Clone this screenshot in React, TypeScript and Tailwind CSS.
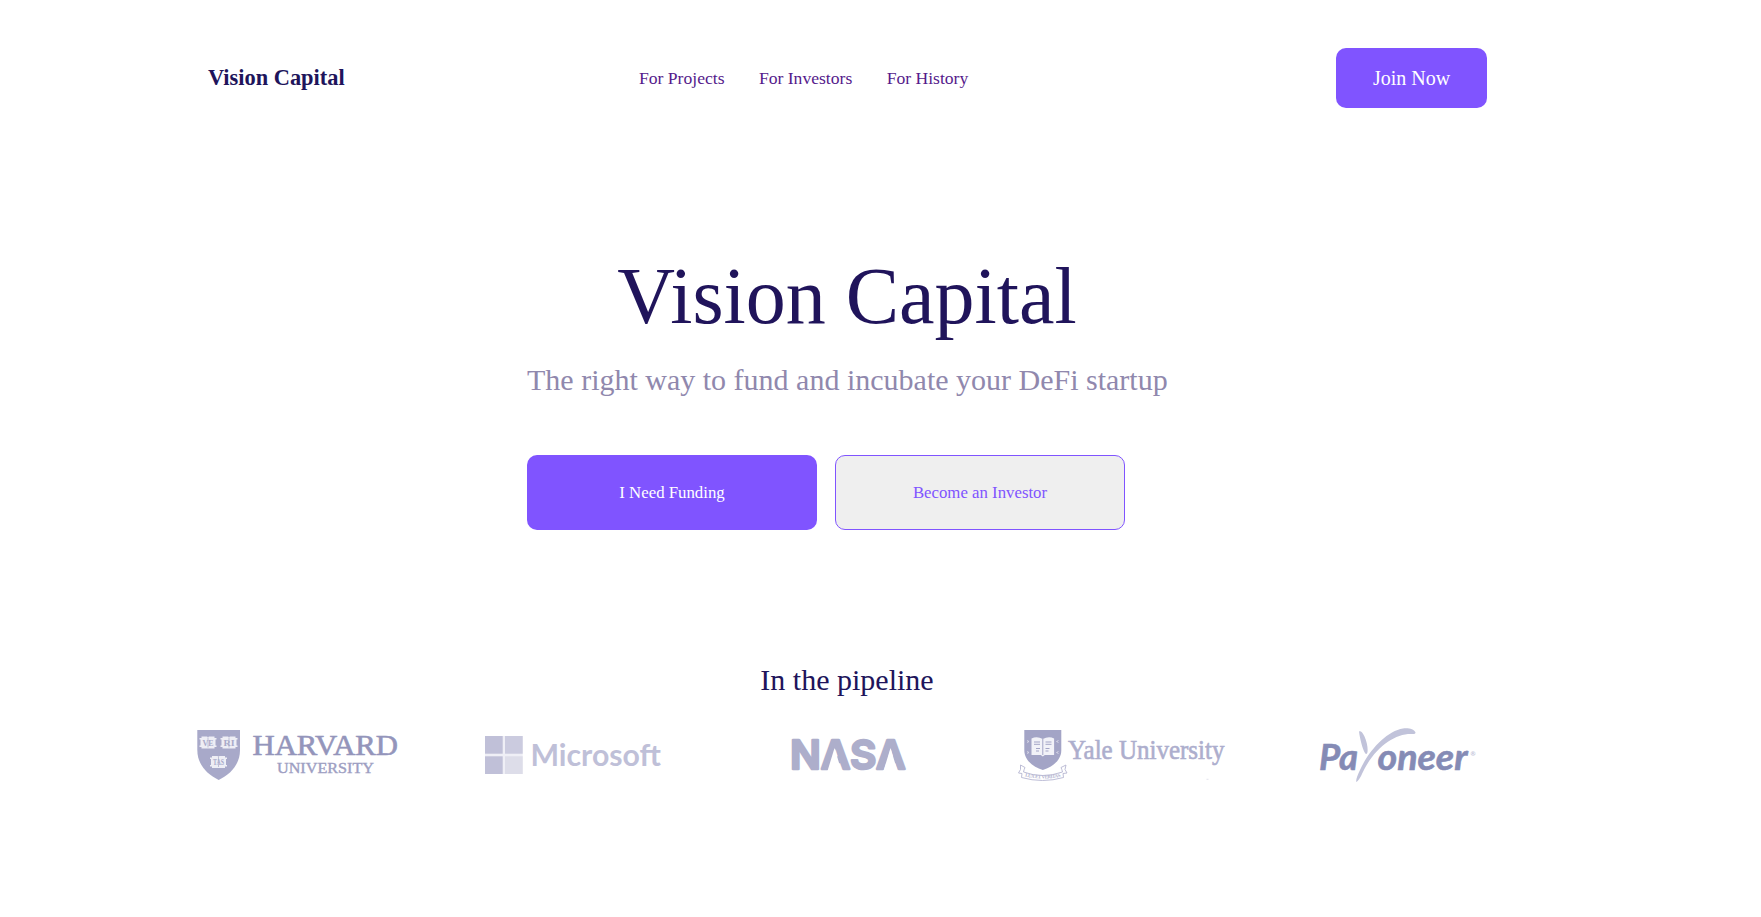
import React from "react";

const SERIF = "'Liberation Serif', serif";

function OpenBook({ x, y, label }: { x: number; y: number; label: string }) {
  return (
    <g>
      <path
        d={`M${x - 1} ${y + 1.5}h2v-1.5h5.5l1 .8 1-.8h5.5v1.5h2v1.5h-1v6h1v1.5h-2v1.5h-13v-1.5h-2v-1.5h1v-6h-1z`}
        fill="#eeeef5"
      />
      <path d={`M${x + 7.5} ${y + 1}v10`} stroke="#a9aac9" strokeWidth="0.7" />
      <text
        x={x + 7.5}
        y={y + 9}
        fontSize="8.5"
        fontWeight="700"
        textAnchor="middle"
        textLength="11"
        lengthAdjust="spacingAndGlyphs"
        fill="#a9aac9"
        fontFamily={SERIF}
      >
        {label}
      </text>
    </g>
  );
}

function HarvardLogo() {
  return (
    <svg className="h-[60px] w-[220px] overflow-visible" viewBox="190 725 220 60" role="img" aria-label="Harvard University">
      <path d="M197.3 730h42.7v20c0 14-9 24-21.3 30-12.300-6-21.400-16-21.400-30z" fill="#a8a9c9" />
      <OpenBook x={200.5} y={736.5} label="VE" />
      <OpenBook x={221.5} y={736.5} label="RI" />
      <OpenBook x={211} y={756} label="TAS" />
      <text x="252.5" y="755" fontSize="28.5" textLength="145.5" lengthAdjust="spacingAndGlyphs" fill="#9495bb" stroke="#9495bb" strokeWidth="0.6" fontFamily={SERIF}>
        HARVARD
      </text>
      <text x="277" y="773" fontSize="15.5" textLength="97" lengthAdjust="spacingAndGlyphs" fill="#9d9ec2" stroke="#9d9ec2" strokeWidth="0.4" fontFamily={SERIF}>
        UNIVERSITY
      </text>
    </svg>
  );
}

function MicrosoftLogo() {
  return (
    <svg className="h-[60px] w-[190px] overflow-visible" viewBox="480 725 190 60" role="img" aria-label="Microsoft">
      <rect x="485" y="736" width="37.7" height="38" fill="#efeff6" />
      <rect x="485" y="736" width="17.7" height="17.7" fill="#c0c0d8" />
      <rect x="505" y="736" width="17.7" height="17.7" fill="#cbcbdf" />
      <rect x="485" y="756.3" width="17.7" height="17.7" fill="#c0c0d8" />
      <rect x="505" y="756.3" width="17.7" height="17.7" fill="#dddde9" />
      <text x="530.5" y="766" fontSize="31" fontWeight="700" textLength="130.5" lengthAdjust="spacingAndGlyphs" fill="#bfc0d8" fontFamily="Lato, sans-serif">
        Microsoft
      </text>
    </svg>
  );
}

function NasaLogo() {
  return (
    <svg className="h-[60px] w-[130px] overflow-visible" viewBox="785 725 130 60" role="img" aria-label="NASA">
      <text x="790" y="769" fontSize="40" fontWeight="600" textLength="115.5" lengthAdjust="spacingAndGlyphs" fill="#adaecb" stroke="#adaecb" strokeWidth="2.4" strokeLinejoin="round" fontFamily="Inter, sans-serif">
        NASA
      </text>
      <path d="M834.5 748l-7 23h14zM890.500 748l-7 23h14z" fill="#fff" />
    </svg>
  );
}

function YaleLogo() {
  return (
    <svg className="h-[60px] w-[220px] overflow-visible" viewBox="1015 725 220 60" role="img" aria-label="Yale University">
      <path d="M1024.3 730h37v20c0 10-8 16.5-18.5 20-10.500-3.500-18.500-10-18.500-20z" fill="#a3a4c6" />
      <path d="M1031.5 738.5q5.5-2.500 11.300.5 5.800-3 11.300-.5v16.5h-9.300l-2 1.500-2-1.500h-9.300z" fill="#f2f2f8" />
      <path d="M1042.8 739v16M1034 742h6M1034 744.3h6M1036 748.5h4M1036 751h3M1045.5 742h6M1045.5 744.3h6M1045.5 748.5h4M1045.5 751h3" fill="none" stroke="#a3a4c6" />
      <path d="M1058.5 740.5l-2 1 2 1M1058.5 751.5l-2 1 2 1M1027 740.5l2 1-2 1M1027 751.5l2 1-2 1" fill="none" stroke="#dedeeb" strokeWidth="0.8" />
      <path id="yale-ribbon" d="M1024 776q19.500 5 39 0" fill="none" />
      <path d="M1020.500 765l4.500 2.500q-1 2-1.500 4.500 19 7 39 0-.500-2.500-1.500-4.500l5-2.500-1 4.500 2 3.500-4 .5.500 4q-21 6-42 0l.5-4-3.500-.5 2-3.500z" fill="#fff" stroke="#b5b6d1" strokeWidth="0.9" />
      <text fontSize="5" fontWeight="700" fill="#b0b1ce" fontFamily={SERIF}>
        <textPath href="#yale-ribbon" startOffset="1" textLength="36">
          LUX ET VERITAS
        </textPath>
      </text>
      <text x="1068" y="758.7" fontSize="26.5" textLength="156.5" lengthAdjust="spacingAndGlyphs" fill="#adaecd" stroke="#adaecd" strokeWidth="0.6" fontFamily={SERIF}>
        Yale University
      </text>
      <path d="M1206.5 779.3h2" stroke="#dcdce9" strokeWidth="0.8" />
    </svg>
  );
}

function PayoneerLogo() {
  return (
    <svg className="h-[60px] w-[165px] overflow-visible" viewBox="1315 725 165 60" role="img" aria-label="Payoneer">
      <g fill="#858bb5" stroke="#858bb5" strokeWidth="0.6" fontFamily="Lato, sans-serif" fontStyle="italic" fontWeight="700" fontSize="36.5">
        <text x="1319" y="769.7" textLength="39" lengthAdjust="spacingAndGlyphs">
          Pa
        </text>
        <text x="1377.5" y="769.7" textLength="90" lengthAdjust="spacingAndGlyphs">
          oneer
        </text>
      </g>
      <path
        d="M1359 731.500c1.500-1 3.500.5 5.500 5 2.500 6 3.500 11 3 15.500-.3 2-1.500 2.700-2.500 1-2.500-4-5-14-6-21.500zM1356.500 782c-1-1 .5-6 3.500-12 9-20 27-39 43-41.500 6-.8 11 1 12.300 3.500.7 1.500-.8 2.200-3 2-16-.8-34.300 11-46.800 33-3.500 6-5 12-9 15z"
        fill="#c1c3da"
      />
      <text x="1470.5" y="756" fontSize="6" fontWeight="700" fill="#b9bbd4" fontFamily="'Open Sans', sans-serif">
        ®
      </text>
    </svg>
  );
}

function Header() {
  return (
    <header className="flex h-[60px] items-center pl-[208px]">
      <div className="w-[431px] text-[22.4px] font-bold text-[#20145b]">Vision Capital</div>
      <nav className="flex w-[697px] gap-[34.4px] text-[17.6px] text-[#551a8b]">
        <a href="#projects">For Projects</a>
        <a href="#investors">For Investors</a>
        <a href="#history">For History</a>
      </nav>
      <button className="h-[60px] w-[151px] rounded-[10px] bg-[#8054ff] text-[20px] text-white">Join Now</button>
    </header>
  );
}

export default function App() {
  return (
    <div className="min-h-[917px] w-full overflow-hidden bg-white pt-12 font-['Liberation_Serif',serif]">
      <Header />
      <main className="flex flex-col">
        <section className="ml-[527px] mt-[142px] w-[640px]">
          <h1 className="text-center text-[80px] leading-[92px] text-[#20145b]">Vision Capital</h1>
          <p className="mt-[21px] text-[30px] leading-[34px] whitespace-nowrap text-[#9088ad]">
            The right way to fund and incubate your DeFi startup
          </p>
          <div className="mt-[58px] flex gap-[18px] text-[16.8px]">
            <button className="h-[75px] w-[290px] rounded-[10px] bg-[#8054ff] text-white">I Need Funding</button>
            <button className="h-[75px] w-[290px] rounded-[10px] border border-[#8054ff] bg-[#efefef] text-[#8054ff]">
              Become an Investor
            </button>
          </div>
        </section>
        <section className="mt-[133px]">
          <h2 className="w-[1694px] text-center text-[30px] leading-[34px] text-[#20145b]">In the pipeline</h2>
          <div className="mt-[28px] flex pl-[190px]">
            <HarvardLogo />
            <div className="ml-[70px]"><MicrosoftLogo /></div>
            <div className="ml-[115px]"><NasaLogo /></div>
            <div className="ml-[100px]"><YaleLogo /></div>
            <div className="ml-[80px]"><PayoneerLogo /></div>
          </div>
        </section>
      </main>
    </div>
  );
}
